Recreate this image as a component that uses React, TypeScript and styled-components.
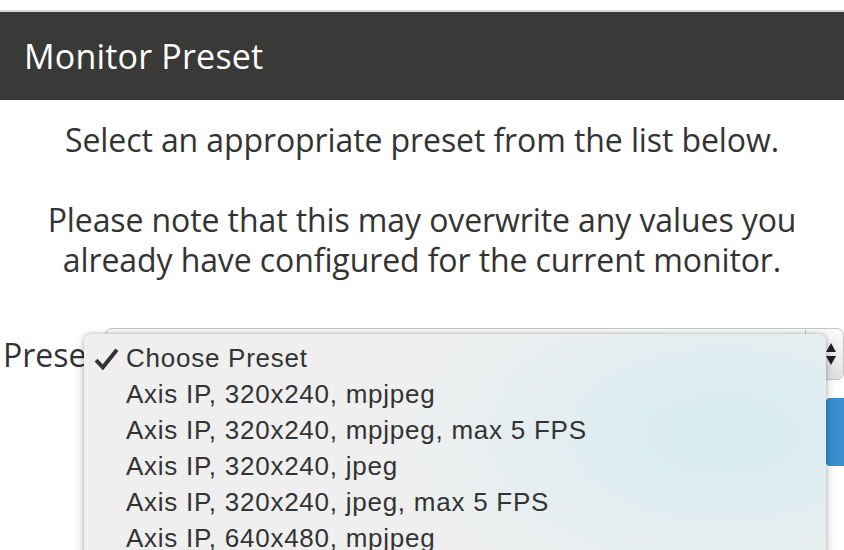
import React from "react";
import styled, { createGlobalStyle } from "styled-components";

const GlobalStyle = createGlobalStyle`
  html, body {
    margin: 0;
    padding: 0;
    background: #ffffff;
    overflow: hidden;
  }
  body {
    font-family: "Open Sans", "DejaVu Sans", sans-serif;
    color: #333333;
  }
`;

const Page = styled.div`
  position: relative;
  width: 844px;
  height: 550px;
  overflow: hidden;
  background: #ffffff;
`;

const TopStrip = styled.div`
  height: 10px;
  border-bottom: 2px solid #d6d6d6;
  background: #ffffff;
`;

const Header = styled.div`
  height: 88px;
  background: #393937;
  display: flex;
  align-items: center;
  padding-left: 24px;
`;

const Title = styled.h1`
  margin: 0;
  font-weight: 400;
  font-size: 34px;
  color: #ffffff;
  letter-spacing: 0.2px;
`;

const Body = styled.div`
  padding: 20px 0 0;
  text-align: center;
`;

const Paragraph = styled.p`
  margin: 0 0 40px;
  font-size: 32px;
  line-height: 40px;
  letter-spacing: -0.1px;
  color: #333333;

  &:last-child {
    margin-bottom: 0;
  }
`;

const FormRow = styled.div`
  display: flex;
  align-items: center;
  gap: 7px;
  margin-top: 48px;
  padding-left: 3px;
`;

const Label = styled.span`
  font-size: 32px;
  color: #333333;
  white-space: nowrap;
`;

const SelectBox = styled.div`
  flex: 1;
  height: 50px;
  border: 1px solid #c4c4c4;
  border-radius: 7px;
  background: linear-gradient(#fbfbfb, #e2e2e2);
  display: flex;
  justify-content: flex-end;
  align-items: stretch;
`;

const ArrowCell = styled.div`
  width: 38px;
  border-left: 1px solid #c8c8c8;
  display: flex;
  align-items: center;
  justify-content: flex-end;
  padding-right: 6px;
  box-sizing: border-box;
`;

const Arrows = styled.svg`
  width: 12px;
  height: 30px;
`;

const ButtonRow = styled.div`
  display: flex;
  justify-content: flex-end;
  margin-top: 18px;
`;

const PrimaryButton = styled.div`
  width: 18px;
  height: 68px;
  background: #3a8fcf;
  border-radius: 4px 0 0 4px;
`;

const Menu = styled.ul`
  position: absolute;
  left: 84px;
  top: 334px;
  width: 742px;
  height: 240px;
  margin: 0;
  padding: 6px 0 0;
  list-style: none;
  border-radius: 7px 7px 0 0;
  background:
    radial-gradient(ellipse 340px 190px at 640px 100px, rgba(214, 236, 240, 1), rgba(214, 236, 240, 0) 100%),
    #efefef;
  box-shadow: 0 0 4px rgba(0, 0, 0, 0.25), 0 4px 14px rgba(0, 0, 0, 0.18);
  font-family: "Liberation Sans", Arial, sans-serif;
`;

const MenuItem = styled.li`
  height: 36px;
  display: flex;
  align-items: center;
  font-size: 26px;
  letter-spacing: 0.75px;
  color: #333333;
  white-space: nowrap;
`;

const CheckCell = styled.span`
  width: 42px;
  padding-left: 10px;
  box-sizing: border-box;
  display: flex;
  align-items: center;
`;

const CheckIcon = styled.svg`
  width: 25px;
  height: 23px;
`;

const presets = [
  "Choose Preset",
  "Axis IP, 320x240, mpjpeg",
  "Axis IP, 320x240, mpjpeg, max 5 FPS",
  "Axis IP, 320x240, jpeg",
  "Axis IP, 320x240, jpeg, max 5 FPS",
  "Axis IP, 640x480, mpjpeg",
];

const App = () => {
  return (
    <Page>
      <GlobalStyle />
      <TopStrip />
      <Header>
        <Title>Monitor Preset</Title>
      </Header>
      <Body>
        <Paragraph>Select an appropriate preset from the list below.</Paragraph>
        <Paragraph>
          Please note that this may overwrite any values you
          <br />
          already have configured for the current monitor.
        </Paragraph>
      </Body>
      <FormRow>
        <Label>Preset</Label>
        <SelectBox>
          <ArrowCell>
            <Arrows viewBox="0 0 12 30">
              <path d="M6 4 L11 13 L1 13 Z" fill="#222" />
              <path d="M6 26 L11 17 L1 17 Z" fill="#222" />
            </Arrows>
          </ArrowCell>
        </SelectBox>
      </FormRow>
      <ButtonRow>
        <PrimaryButton />
      </ButtonRow>
      <Menu>
        {presets.map((p, i) => (
          <MenuItem key={p}>
            <CheckCell>
              {i === 0 && (
                <CheckIcon viewBox="0 0 24 22">
                  <path
                    d="M2 12.5 L8.5 19.5 L22 2.5"
                    fill="none"
                    stroke="#333"
                    strokeWidth="3.8"
                    strokeLinejoin="miter"
                  />
                </CheckIcon>
              )}
            </CheckCell>
            {p}
          </MenuItem>
        ))}
      </Menu>
    </Page>
  );
};

export default App;
